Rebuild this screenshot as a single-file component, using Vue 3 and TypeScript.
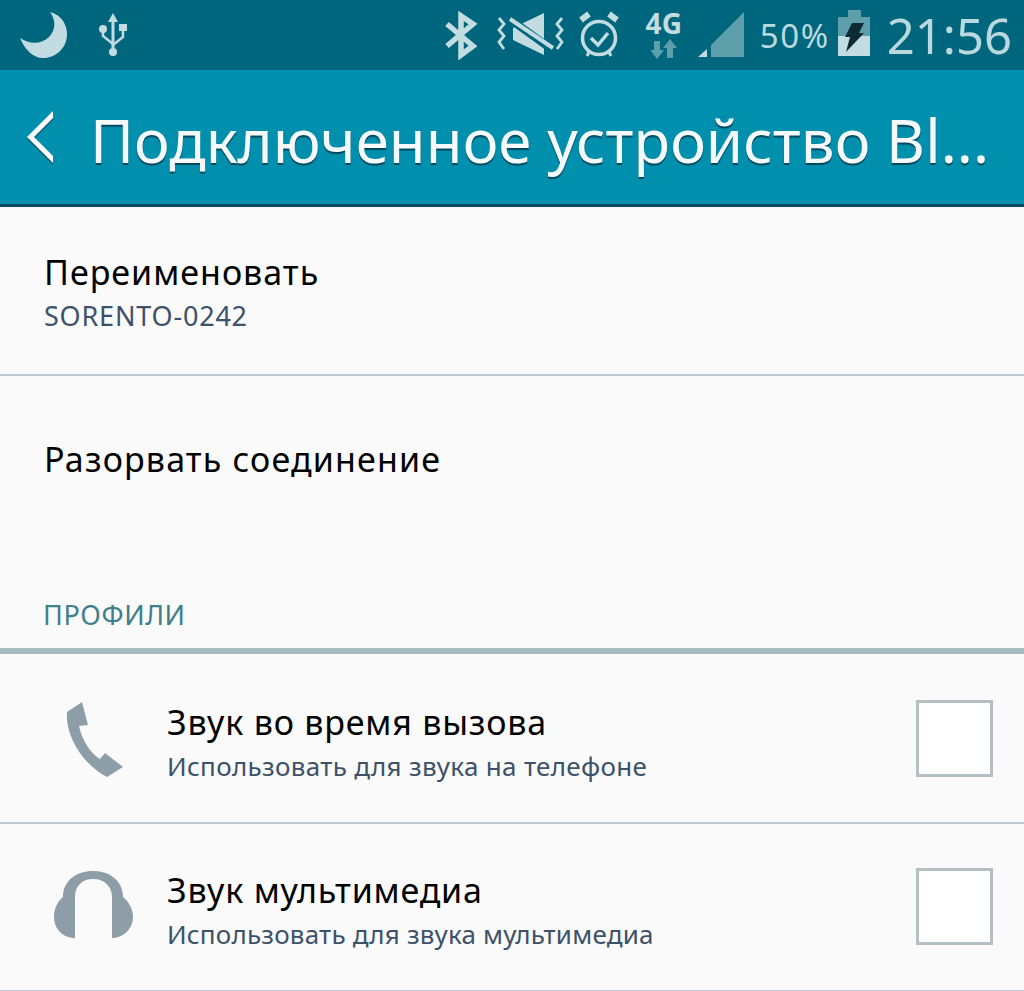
<script setup lang="ts">
interface Profile { title: string; sub: string; kind: 'phone' | 'media' }
const profiles: Profile[] = [
  { title: 'Звук во время вызова', sub: 'Использовать для звука на телефоне', kind: 'phone' },
  { title: 'Звук мультимедиа', sub: 'Использовать для звука мультимедиа', kind: 'media' },
]
</script>

<template>
  <div class="screen">
    <header class="status">
      <svg class="moon" viewBox="20 10 48 50" width="48" height="50"><path fill="#C3DCE1" d="M50 12C62 15 67 25 67 34C67 48 56 58 43 58C33 58 25 50 20 38C30 45 42 44 49 37C56 30 56 20 50 12Z"/></svg>
      <svg class="usb" viewBox="96 12 32 46" width="32" height="46">
        <path fill="#C3DCE1" d="M112 13l5 9h-3.500v27h-3V22H107z"/>
        <circle cx="112" cy="52" r="4" fill="#C3DCE1"/><circle cx="102" cy="29" r="4" fill="#C3DCE1"/>
        <rect x="118" y="24" width="8" height="7" fill="#C3DCE1"/>
        <path fill="none" stroke="#C3DCE1" stroke-width="2.500" d="M102 30v6l10 8M122 30v7l-10 8"/>
      </svg>
      <span class="spacer"></span>
      <svg class="bt" viewBox="444 10 34 50" width="34" height="50"><path fill="none" stroke="#C3DCE1" stroke-width="5.500" d="M447 24L473 46L461 55V16L473 24L447 46"/></svg>
      <svg class="mute" viewBox="496 12 67 45" width="67" height="45">
        <path fill="#C3DCE1" d="M512 28L543 13V55L512 40Z"/>
        <path stroke="#00667D" stroke-width="8" d="M506 17L553 51"/>
        <path stroke="#C3DCE1" stroke-width="4" d="M509 19L552 48"/>
        <path fill="none" stroke="#C3DCE1" stroke-width="2.800" d="M498 18L503 24L498 30L503 36L498 42L503 49M561 18L556 24L561 30L556 36L561 42L556 49"/>
      </svg>
      <svg class="alarm" viewBox="577 11 42 46" width="42" height="46">
        <circle cx="598" cy="38" r="16.500" fill="none" stroke="#C3DCE1" stroke-width="3.500"/>
        <path fill="none" stroke="#C3DCE1" stroke-width="3.500" d="M590 38L597 45L607 33"/>
        <path stroke="#C3DCE1" stroke-width="6" d="M580 20L588 14M616 20L608 14"/>
        <path stroke="#C3DCE1" stroke-width="3" d="M589 50L586 56M607 50L610 56"/>
      </svg>
      <div class="net">
        <span class="net-label">4G</span>
        <svg viewBox="652 39 26 20" width="26" height="20"><path fill="#5F9FAC" d="M655 41h6v9h4l-7 9l-7-9h4zM668 48h-4l7-9l7 9h-4v10h-6z"/></svg>
      </div>
      <svg class="signal" viewBox="698 12 46 45" width="46" height="45"><path fill="#C3DCE1" d="M698 57L707 49V57Z"/><path fill="#5F9FAC" d="M711 57V45L744 12V57Z"/></svg>
      <span class="pct">50%</span>
      <svg class="batt" viewBox="838 10 32 47" width="32" height="47">
        <path fill="#5F9FAC" d="M848 10H861V17H870V36H838V17H848Z"/>
        <rect x="838" y="36" width="32" height="20" fill="#C3DCE1"/>
        <path fill="#0D2A35" d="M852 23H864L859 33H864L846 52L850 37H845Z"/>
      </svg>
      <span class="time">21:56</span>
    </header>

    <div class="appbar">
      <svg class="back" viewBox="24 110 32 58" width="32" height="58"><path fill="#0B5A70" d="M53 115L27 141L53 167V160L34 141L53 122Z"/><path fill="#FAFDFD" d="M53 113L27 139L53 165V158L34 139L53 120Z"/></svg>
      <h1 class="title">Подключенное устройство Bl...</h1>
    </div>

    <main class="list">
      <div class="row rename">
        <div class="primary">Переименовать</div>
        <div class="secondary device">SORENTO-0242</div>
      </div>
      <div class="row disconnect"><div class="primary">Разорвать соединение</div></div>
      <div class="section">ПРОФИЛИ</div>
      <div v-for="p in profiles" :key="p.title" class="row profile">
        <div class="icon">
          <svg v-if="p.kind === 'phone'" viewBox="54 699 80 80" width="80" height="80"><path fill="#8E9EA8" d="M82 702L67 712C65 735 82 764 107 777L123 767L105 753L100 759C90 753 82 740 79 726L88 725Z"/></svg>
          <svg v-else viewBox="54 867 80 80" width="80" height="80"><path fill="#8E9EA8" d="M75 938C62 938 54 928 54 917C54 908 58 901 63 897C63 881 76 871 93 871C110 871 123 881 123 897C128 901 133 908 133 917C133 928 124 938 112 938V897C112 886 104 879 93 879C82 879 75 886 75 897Z"/></svg>
        </div>
        <div class="texts">
          <div class="primary">{{ p.title }}</div>
          <div class="secondary">{{ p.sub }}</div>
        </div>
        <div class="check"></div>
      </div>
    </main>
  </div>
</template>

<style>
html, body { margin: 0; background: #FAFAFA; }
</style>

<style scoped>
.screen { width: 1024px; height: 991px; overflow: hidden; background: #FAFAFA; font-family: "Noto Sans", "Open Sans", sans-serif; }
.status { height: 70px; box-sizing: border-box; background: #00667D; display: flex; align-items: flex-start; color: #B9D9DF; }
.moon { margin: 10px 0 0 20px; }
.usb { margin: 12px 0 0 29px; }
.spacer { flex: 1; }
.bt { margin-top: 10px; }
.mute { margin: 12px 0 0 19px; }
.alarm { margin: 11px 0 0 14px; }
.net { margin: 8px 0 0 23px; width: 42px; display: flex; flex-direction: column; align-items: center; }
.net-label { font-size: 28px; font-weight: 700; line-height: 31px; color: #C3DCE1; }
.signal { margin: 12px 0 0 13px; }
.pct { margin: 14px 0 0 16px; font-size: 33px; letter-spacing: 1.6px; line-height: 44px; }
.batt { margin: 10px 0 0 8px; }
.time { margin: 5px 12px 0 17px; font-size: 49px; line-height: 60px; }
.appbar { height: 134px; background: #0090AE; display: flex; align-items: center; border-bottom: 3px solid #0B4A5E; box-sizing: content-box; }
.back { margin-left: 24px; flex: none; }
.title { margin: 0 0 0 34px; font-size: 60px; letter-spacing: .07px; font-weight: 400; line-height: 80px; padding-top: 6px; color: #F4FAFB; white-space: nowrap; text-shadow: 0 2px 1px rgba(0, 50, 70, .8); }
.row { border-bottom: 2px solid #BEC8CE; box-sizing: border-box; }
.primary { font-size: 34px; letter-spacing: 1px; line-height: 46px; color: #000; }
.secondary { font-size: 26px; letter-spacing: .32px; line-height: 42px; color: #3D5268; }
.device { font-size: 27px; letter-spacing: .8px; }
.rename { height: 169px; padding: 42px 0 0 44px; }
.disconnect { border: 0; height: 221px; padding: 60px 0 0 44px; }
.disconnect .primary { letter-spacing: 1.15px; }
.section { height: 51px; padding-left: 43px; font-size: 27px; letter-spacing: .6px; line-height: 36px; color: #3F7F8C; border-bottom: 6px solid #A5BCC0; margin-bottom: 2px; }
.profile { height: 168px; display: flex; align-items: center; }
.icon { width: 80px; margin-left: 54px; display: flex; }
.texts { margin-left: 33px; padding-top: 7px; flex: 1; }
.texts .primary { letter-spacing: .8px; }
.profile:last-child .secondary { letter-spacing: .2px; }
.check { width: 77px; height: 77px; box-sizing: border-box; margin-top: -1px; margin-right: 31px; border: 3px solid #B4C1C4; background: #fff; }
</style>
